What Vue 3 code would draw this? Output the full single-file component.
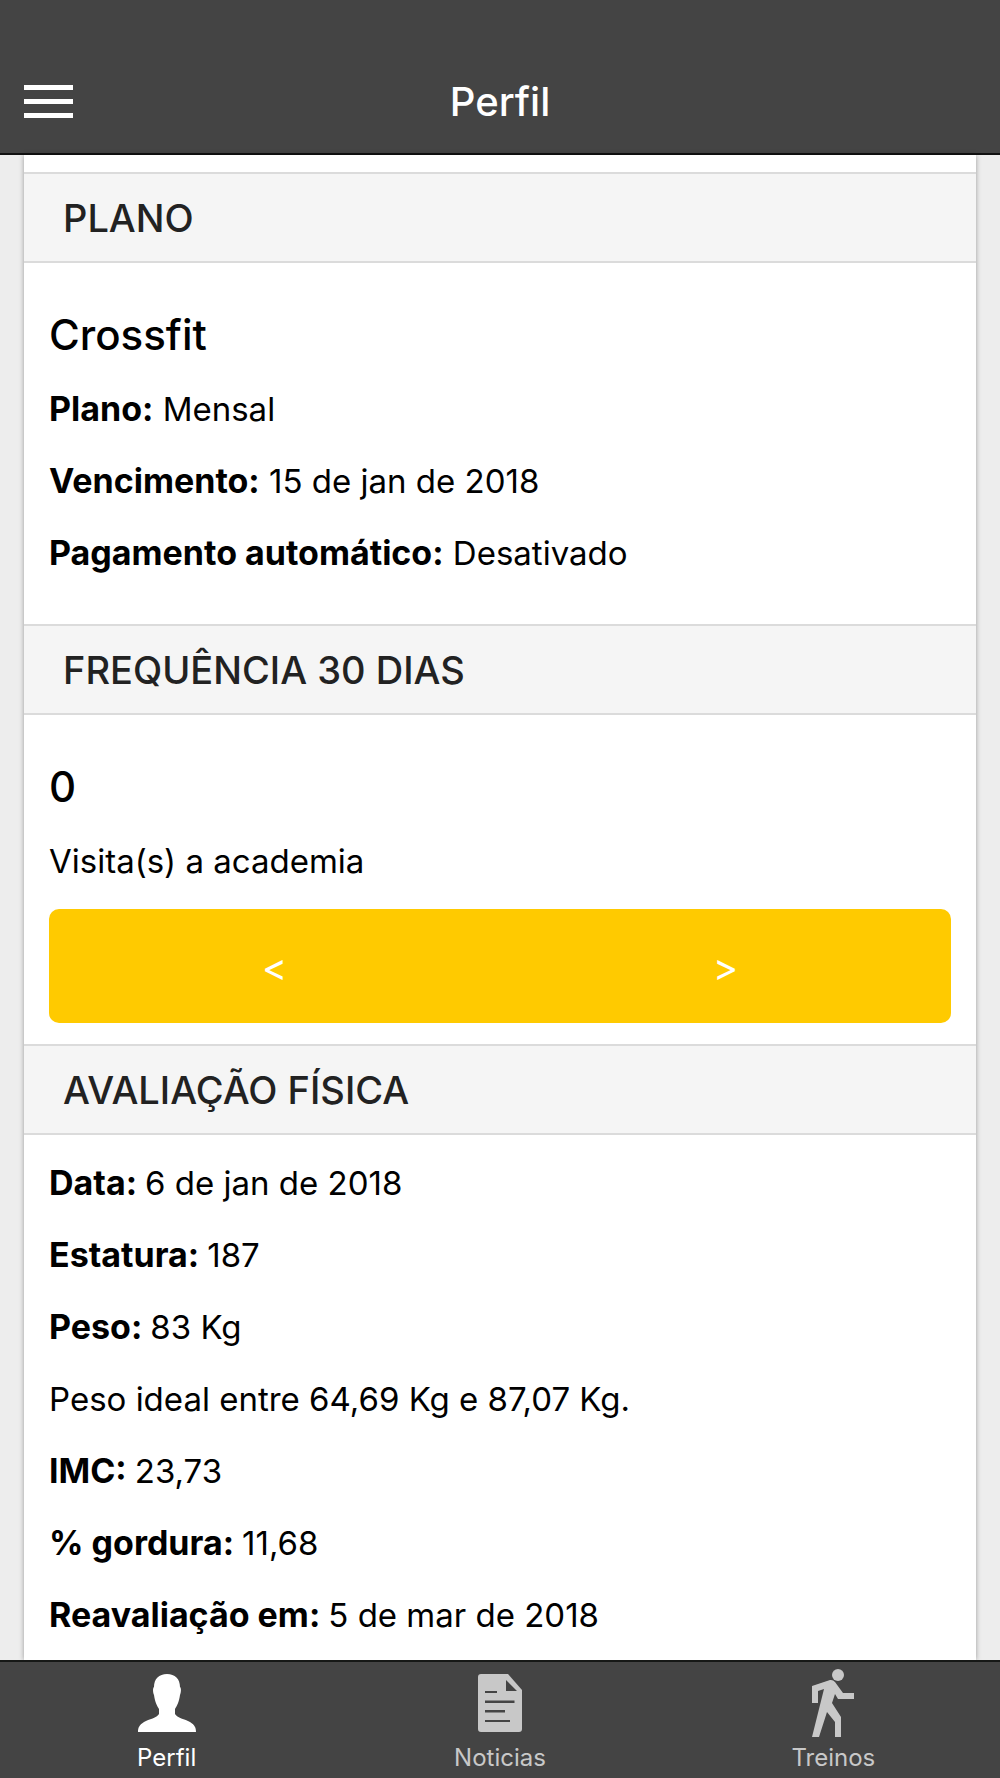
<script setup>
const plan = [
  { label: 'Plano:', value: 'Mensal' },
  { label: 'Vencimento:', value: '15 de jan de 2018' },
  { label: 'Pagamento automático:', value: 'Desativado' },
]

const assessment = [
  { label: 'Data:', value: '6 de jan de 2018' },
  { label: 'Estatura:', value: '187' },
  { label: 'Peso:', value: '83 Kg' },
  { value: 'Peso ideal entre 64,69 Kg e 87,07 Kg.' },
  { label: 'IMC:', value: '23,73' },
  { label: '% gordura:', value: '11,68' },
  { label: 'Reavaliação em:', value: '5 de mar de 2018' },
]
</script>

<template>
  <div class="page">
    <header class="top-bar">
      <button class="menu" type="button" aria-label="Menu">
        <span></span><span></span><span></span>
      </button>
      <h1>Perfil</h1>
    </header>

    <main class="content">
      <div class="card">
        <section>
          <h2 class="band">PLANO</h2>
          <div class="body">
            <h3>Crossfit</h3>
            <div class="rows">
              <p v-for="row in plan" :key="row.label"><b>{{ row.label }}</b> {{ row.value }}</p>
            </div>
          </div>
        </section>

        <section>
          <h2 class="band">FREQUÊNCIA 30 DIAS</h2>
          <div class="body visits">
            <h3>0</h3>
            <p>Visita(s) a academia</p>
            <div class="pager">
              <button type="button">&lt;</button>
              <button type="button">&gt;</button>
            </div>
          </div>
        </section>

        <section>
          <h2 class="band">AVALIAÇÃO FÍSICA</h2>
          <div class="body rows assessment">
            <p v-for="row in assessment" :key="row.value">
              <b v-if="row.label">{{ row.label + ' ' }}</b>{{ row.value }}
            </p>
          </div>
        </section>
      </div>
    </main>

    <nav class="tabs">
      <a href="#perfil" class="tab active">
        <svg viewBox="0 0 70 70" aria-hidden="true">
          <path d="M35 6C43 6 48 11 48 19C49.500 20 49 25 48 27C47 34 45 38 43 41V46C45 50 53 51 58 54C63 57 64 60 64 64H6C6 60 7 57 12 54C17 51 25 50 27 46V41C25 38 23 34 22 27C21 25 20.500 20 22 19C22 11 27 6 35 6Z" />
        </svg>
        <span>Perfil</span>
      </a>
      <a href="#noticias" class="tab">
        <svg viewBox="0 0 70 70" aria-hidden="true">
          <path fill-rule="evenodd" d="M16 6H43L57 22V61Q57 64 54 64H16Q13 64 13 61V9Q13 6 16 6ZM41 12V23H52ZM20 23V25H32V23ZM20 32.500V35H49.500V32.500ZM20 42V44.500H40V42ZM20 52V54H45V52Z" />
        </svg>
        <span>Noticias</span>
      </a>
      <a href="#treinos" class="tab">
        <svg viewBox="6 0 70 70" aria-hidden="true">
          <circle cx="46" cy="7" r="6" />
          <path d="M38 12Q41 11.500 43 14L51 25H62V31H46L43 26L40 35L49 49V69H43V54L35 44L27 69H20L32 21L26 23V35H20V18Z" />
        </svg>
        <span>Treinos</span>
      </a>
    </nav>
  </div>
</template>

<style>
body {
  margin: 0;
  background: #ededed;
}
</style>

<style scoped>
.page {
  display: flex;
  flex-direction: column;
  min-height: 100vh;
  font-family: Inter, 'Liberation Sans', sans-serif;
  font-size: 33px;
  line-height: 40px;
  color: #000;
}

h1,
h2,
h3,
p {
  margin: 0;
}

b {
  font-size: 34px;
  line-height: 1;
}

button {
  padding: 0;
  border: 0;
  background: none;
  font: inherit;
  color: #fff;
}

.top-bar {
  display: grid;
  grid-template-columns: 1fr auto 1fr;
  align-items: center;
  height: 102px;
  padding: 51px 24px 0;
  border-bottom: 2px solid #111;
  background: #444;
  color: #fff;
}

.top-bar h1 {
  font-size: 40px;
  font-weight: 500;
  line-height: 48px;
}

.menu {
  display: flex;
  flex-direction: column;
  gap: 9px;
  width: 49px;
  padding-bottom: 2px;
}

.menu span {
  height: 5px;
  background: #fff;
}

.content {
  display: flex;
  flex: 1;
  padding: 0 24px;
}

.card {
  flex: 1;
  padding-top: 17px;
  background: #fff;
  box-shadow: 0 0 5px rgba(0, 0, 0, 0.35);
}

.band {
  padding: 20px 39px 19px;
  border: solid #dbdbdb;
  border-width: 2px 0;
  background: #f5f5f5;
  font-size: 38px;
  font-weight: 500;
  line-height: 48px;
  color: #222;
}

.body {
  padding: 46px 25px 51px;
}

h3 {
  margin-bottom: 28px;
  font-size: 42px;
  font-weight: 500;
  line-height: 52px;
}

.rows {
  display: flex;
  flex-direction: column;
  gap: 32px;
}

.assessment {
  padding-top: 28px;
  padding-bottom: 25px;
}

.visits {
  padding-bottom: 21px;
}

.pager {
  display: flex;
  height: 114px;
  margin-top: 28px;
  border-radius: 10px;
  background: #ffca00;
}

.pager button {
  flex: 1;
  padding-top: 2px;
  font-size: 38px;
}

.tabs {
  display: flex;
  height: 116px;
  border-top: 2px solid #161816;
  background: #444;
}

.tab {
  display: flex;
  flex: 1;
  flex-direction: column;
  align-items: center;
  padding-top: 6px;
  color: #c8c8c8;
  font-size: 24px;
  line-height: 30px;
  text-decoration: none;
}

.tab.active {
  color: #fff;
}

.tab svg {
  width: 70px;
  height: 70px;
  margin-bottom: 5px;
  fill: currentColor;
}
</style>
